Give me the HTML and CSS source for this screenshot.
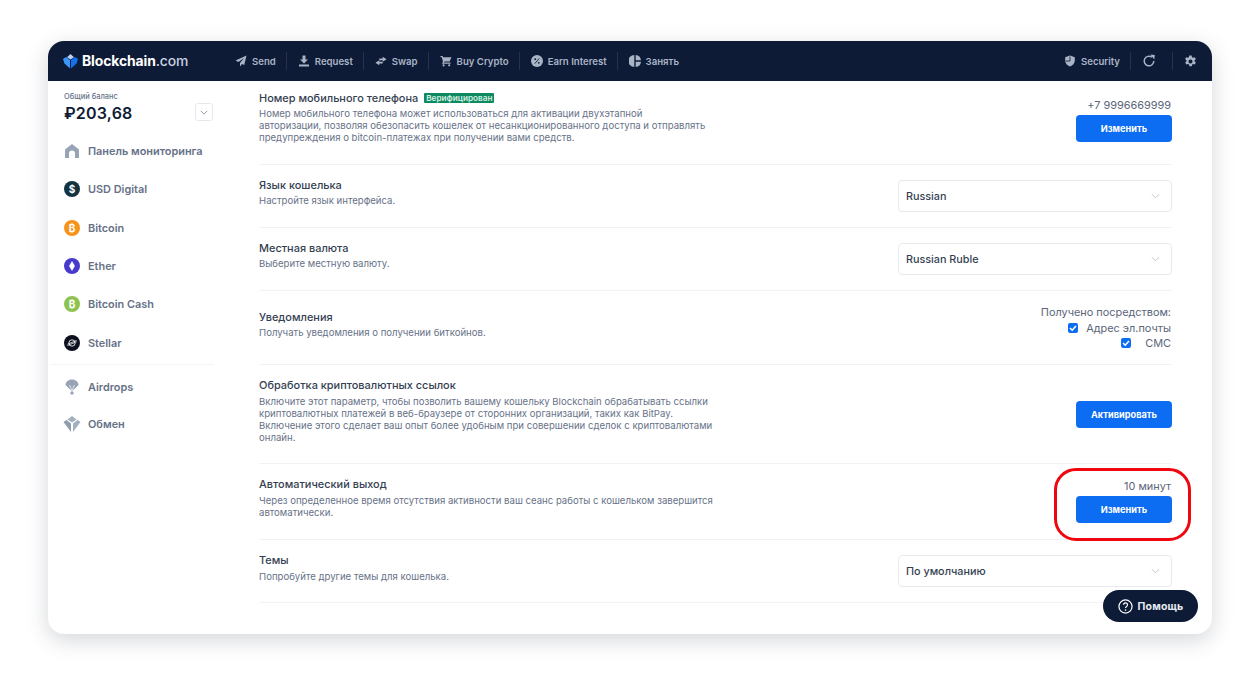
FILE: index.html
```html
<!DOCTYPE html>
<html lang="ru">
<head>
<meta charset="utf-8">
<title>Blockchain.com</title>
<link rel="stylesheet" href="styles.css">
</head>
<body>
<div class="window">
  <header class="topbar">
    <div class="logo">
      <svg class="logo-mark" viewBox="0 0 15 15"><path d="M7.500 0L11 3.200 7.500 5.600 4 3.200z" fill="#bcd3f5"/><path d="M0 5l3-2 4 3v8.500L1.500 9.500z" fill="#3b97f7"/><path d="M15 5l-3-2-4 3v8.500l5.500-5z" fill="#1272ee"/></svg>
      <span class="logo-text"><b>Blockchain</b>.com</span>
    </div>
    <nav class="nav">
      <a class="nav-item"><svg viewBox="0 0 12 12"><path d="M11.500.5L.5 5.500l3 1.600L9 3 5 8v3.500l2-2.600 2.200 1.100z"/></svg>Send</a>
      <a class="nav-item"><svg viewBox="0 0 12 12"><path d="M4.500.5h3v4H10L6 8.500 2 4.500h2.500zM1 9.500h10v2H1z"/></svg>Request</a>
      <a class="nav-item"><svg viewBox="0 0 14 12"><path d="M9 1l4.500 3L9 7V5H5V3h4zM5 5v2h4v2H5v2L.5 8z"/></svg>Swap</a>
      <a class="nav-item"><svg viewBox="0 0 12 12"><path d="M.5 1H2.600l.5 1.200h8.400L9.600 6.500H4.400l-.5 1h6.600v1.200H2l1-2.300L1.800 2.200H.5z"/><circle cx="3.600" cy="10.300" r="1.100"/><circle cx="9.200" cy="10.300" r="1.100"/></svg>Buy Crypto</a>
      <a class="nav-item"><svg viewBox="0 0 12 12"><circle cx="6" cy="6" r="6"/><path d="M3.800 8.600l4.400-5.200" stroke="#0e1b36" stroke-width=".9"/><circle cx="4.200" cy="4.200" r=".9" fill="#0e1b36"/><circle cx="7.800" cy="7.800" r=".9" fill="#0e1b36"/></svg>Earn Interest</a>
      <a class="nav-item"><svg viewBox="0 0 12 12"><path d="M5.300 0v12A6 6 0 0 1 5.300 0zM6.700 0A6 6 0 0 1 12 5.300H6.700zM6.700 6.700H12A6 6 0 0 1 6.700 12z"/></svg>Занять</a>
    </nav>
    <div class="tools">
      <a class="nav-item security"><svg viewBox="0 0 12 12"><path d="M6 .5l4.800 1.700v3.300c0 3-2 5.100-4.800 6-2.800-.9-4.800-3-4.800-6V2.200z"/><path d="M6 1.500v4.500H1.800" stroke="#0e1b36" stroke-width=".8" fill="none"/></svg>Security</a>
      <a class="nav-item tool-refresh"><svg viewBox="0 0 14 14"><path d="M11.800 7A4.800 4.800 0 1 1 9.900 3.200" fill="none" stroke="#a9b4c6" stroke-width="1.500"/><path d="M8.300.5l4.500.5-.5 4.500z" fill="#a9b4c6"/></svg></a>
      <a class="nav-item tool-gear"><svg viewBox="0 0 14 14"><path fill-rule="evenodd" d="M5.800.5h2.400l.4 1.800 1.100.6 1.700-.6L12.800 4.400l-1.400 1.200v1.300l1.400 1.200-1.200 2.100-1.700-.6-1.100.6-.4 1.800H5.800l-.4-1.800-1.100-.6-1.700.6L1.200 8.100l1.400-1.200V5.600L1.200 4.400l1.200-2.100 1.700.6 1.100-.6zM7 4.800a2.200 2.200 0 1 0 0 4.400 2.200 2.200 0 0 0 0-4.400z"/></svg></a>
    </div>
  </header>
  <div class="main">
    <aside class="sidebar">
      <div class="balance">
        <div>
          <div class="balance-label">Общий баланс</div>
          <div class="balance-value">₽203,68</div>
        </div>
        <span class="balance-toggle"><svg viewBox="0 0 10 6"><path d="M1 1l4 4 4-4" fill="none" stroke="#8a96a8" stroke-width="1.200"/></svg></span>
      </div>
      <ul class="menu">
        <li class="menu-item home"><svg class="ico" viewBox="0 0 16 16"><path d="M8 1l7 5.500V15h-4v-4.500a3 3 0 0 0-6 0V15H1V6.500z" fill="#98a4b6"/></svg>Панель мониторинга</li>
        <li class="menu-item"><span class="coin usd">$</span>USD Digital</li>
        <li class="menu-item"><span class="coin btc">₿</span>Bitcoin</li>
        <li class="menu-item"><span class="coin eth"><svg viewBox="0 0 8 12"><path d="M4 0l3.500 6L4 12 .5 6z" fill="#fff"/></svg></span>Ether</li>
        <li class="menu-item"><span class="coin bch">₿</span>Bitcoin Cash</li>
        <li class="menu-item"><span class="coin xlm"><svg viewBox="0 0 12 12"><circle cx="6" cy="6" r="3.800" fill="none" stroke="#fff" stroke-width="1"/><path d="M.5 7.500L11.500 3M.5 9L11.500 4.500" stroke="#fff" stroke-width=".9"/></svg></span>Stellar</li>
      </ul>
      <ul class="menu menu-extra">
        <li class="menu-item"><svg class="ico" viewBox="0 0 16 16"><path d="M8 .5c3.800 0 6.500 2.500 6.500 5.500l-5.700 5.500H7.200L1.500 6C1.500 3 4.200.5 8 .5z" fill="#98a4b6"/><path d="M5.500 6L8 11.500 10.500 6" stroke="#fff" stroke-width=".7" fill="none"/><circle cx="8" cy="14" r="1.700" fill="#98a4b6"/></svg>Airdrops</li>
        <li class="menu-item"><svg class="ico ico-lg" viewBox="0 0 18 18"><path d="M9 1l4.500 3.500L9 7.500 4.500 4.500z" fill="#a3aebe"/><path d="M.5 7l3-2L8 8.500V17z" fill="#8f9bae"/><path d="M17.500 7l-3-2L10 8.500V17z" fill="#a3aebe"/></svg>Обмен</li>
      </ul>
    </aside>
    <section class="settings">
      <div class="row row-phone">
        <div class="info">
          <h3 class="title">Номер мобильного телефона <span class="badge">Верифицирован</span></h3>
          <p class="desc">Номер мобильного телефона может использоваться для активации двухэтапной<br>авторизации, позволяя обезопасить кошелек от несанкционированного доступа и отправлять предупреждения о bitcoin-платежах при получении вами средств.</p>
        </div>
        <div class="control">
          <span class="value">+7 9996669999</span>
          <button class="btn">Изменить</button>
        </div>
      </div>
      <div class="row row-select">
        <div class="info">
          <h3 class="title">Язык кошелька</h3>
          <p class="desc">Настройте язык интерфейса.</p>
        </div>
        <div class="select">Russian<svg viewBox="0 0 10 6"><path d="M1 1l4 4 4-4" fill="none" stroke="#b5bfcc" stroke-width="1"/></svg></div>
      </div>
      <div class="row row-select">
        <div class="info">
          <h3 class="title">Местная валюта</h3>
          <p class="desc">Выберите местную валюту.</p>
        </div>
        <div class="select">Russian Ruble<svg viewBox="0 0 10 6"><path d="M1 1l4 4 4-4" fill="none" stroke="#b5bfcc" stroke-width="1"/></svg></div>
      </div>
      <div class="row row-notify">
        <div class="info">
          <h3 class="title">Уведомления</h3>
          <p class="desc">Получать уведомления о получении биткойнов.</p>
        </div>
        <div class="control control-notify">
          <span class="value">Получено посредством:</span>
          <label class="check"><span class="box"><svg viewBox="0 0 10 10"><path d="M2 5l2.200 2.200L8 3" fill="none" stroke="#fff" stroke-width="1.600"/></svg></span><span class="check-label">Адрес эл.почты</span></label>
          <label class="check"><span class="box"><svg viewBox="0 0 10 10"><path d="M2 5l2.200 2.200L8 3" fill="none" stroke="#fff" stroke-width="1.600"/></svg></span><span class="check-label">СМС</span></label>
        </div>
      </div>
      <div class="row row-links">
        <div class="info">
          <h3 class="title">Обработка криптовалютных ссылок</h3>
          <p class="desc">Включите этот параметр, чтобы позволить вашему кошельку Blockchain обрабатывать ссылки криптовалютных платежей в веб-браузере от сторонних организаций, таких как BitPay. Включение этого сделает ваш опыт более удобным при совершении сделок с криптовалютами онлайн.</p>
        </div>
        <div class="control">
          <button class="btn">Активировать</button>
        </div>
      </div>
      <div class="row row-logout">
        <div class="info">
          <h3 class="title">Автоматический выход</h3>
          <p class="desc">Через определенное время отсутствия активности ваш сеанс работы с кошельком завершится автоматически.</p>
        </div>
        <div class="control">
          <span class="value">10 минут</span>
          <button class="btn">Изменить</button>
        </div>
      </div>
      <div class="row row-select row-theme">
        <div class="info">
          <h3 class="title">Темы</h3>
          <p class="desc">Попробуйте другие темы для кошелька.</p>
        </div>
        <div class="select">По умолчанию<svg viewBox="0 0 10 6"><path d="M1 1l4 4 4-4" fill="none" stroke="#b5bfcc" stroke-width="1"/></svg></div>
      </div>
    </section>
  </div>
  <div class="highlight"></div>
  <button class="help"><svg viewBox="0 0 16 16"><circle cx="8" cy="8" r="7" fill="none" stroke="#fff" stroke-width="1.300"/><path d="M5.900 6.200a2.100 2.100 0 1 1 3.300 1.700c-.8.500-1.200.9-1.200 1.700" fill="none" stroke="#fff" stroke-width="1.300"/><circle cx="8" cy="11.700" r=".9" fill="#fff"/></svg>Помощь</button>
</div>
</body>
</html>
```

FILE: styles.css
```css
* { box-sizing: border-box; }
html, body { margin: 0; padding: 0; background: #fff; }
body { height: 675px; overflow: hidden; font-family: Inter, "Noto Sans", sans-serif; padding: 41px 48px 0; }
.window { position: relative; width: 1164px; height: 593px; background: #fff; border-radius: 16px; box-shadow: 0 6px 22px rgba(40,50,70,.2); display: flex; flex-direction: column; }
.topbar { height: 40px; flex: none; background: #0e1b36; border-radius: 16px 16px 0 0; display: flex; align-items: center; padding: 0 15px; }
.logo { display: flex; align-items: center; gap: 4px; width: 172px; flex: none; }
.logo-mark { width: 15px; height: 15px; flex: none; }
.logo-text { color: #c9d3e2; font-size: 13.900px; font-weight: 500; letter-spacing: -.1px; }
.logo-text b { color: #fff; font-weight: 700; }
.nav { display: flex; align-items: center; }
.nav-item { display: flex; align-items: center; gap: 5px; color: #a9b4c6; font-size: 9.600px; font-weight: 600; height: 18px; padding: 0 10px 0 11px; border-left: 1px solid #26324c; white-space: nowrap; }
.nav-item:first-child { border-left: 0; padding-left: 0; }
.nav-item svg { width: 12px; height: 12px; fill: #a9b4c6; flex: none; }
.tools { margin-left: auto; display: flex; align-items: center; }
.tools .tool-refresh { padding: 0 16px 0 11px; }
.tools .tool-gear { padding: 0 0 0 11px; }
.tool-refresh svg { width: 14px; height: 14px; }
.tool-gear svg { width: 13px; height: 13px; }
.main { flex: 1; display: flex; min-height: 0; }
.sidebar { width: 200px; flex: none; padding: 11px 0 0 16px; }
.balance { display: flex; justify-content: space-between; width: 149px; }
.balance-label { font-size: 7.500px; font-weight: 500; color: #67738a; line-height: 10px; }
.balance-value { font-size: 16px; font-weight: 600; color: #0e1b36; line-height: 21px; margin-top: 1px; letter-spacing: .2px; }
.balance-toggle { width: 18px; height: 18px; margin-top: 11px; border: 1px solid #e4e8ee; border-radius: 3px; display: flex; align-items: center; justify-content: center; }
.balance-toggle svg { width: 8px; height: 5px; }
.menu { list-style: none; margin: 0; padding: 0; }
.menu-item { display: flex; align-items: center; gap: 8px; font-size: 10.900px; font-weight: 600; color: #677288; height: 38.300px; white-space: nowrap; }
.menu-item.home { margin-top: 8px; }
.menu-extra { border-top: 1px solid #f2f4f6; margin: 2px 0 0 -13px; padding: 3px 0 0 13px; width: 163px; }
.menu-item .ico { width: 16px; height: 16px; flex: none; }
.menu-item .ico-lg { width: 18px; height: 18px; margin: 0 -1px; }
.menu-extra .menu-item { height: 37.500px; }
.coin { width: 16px; height: 16px; border-radius: 50%; flex: none; display: flex; align-items: center; justify-content: center; color: #fff; font-size: 10px; font-weight: 700; }
.coin svg { width: 10px; height: 10px; }
.usd { background: #12333f; }
.btc { background: #f7931a; }
.eth { background: #473bcb; }
.bch { background: #8dc351; }
.xlm { background: #0b0f1e; }
.settings { flex: 1; padding: 0 40px 0 11px; min-width: 0; }
.row { display: flex; justify-content: space-between; border-bottom: 1px solid #f1f3f5; }
.row-phone { height: 84px; padding-top: 11px; }
.row-phone .control { margin-top: 6px; gap: 2px; }
.row-select { height: 63px; padding-top: 14px; }
.row-select .select { margin-top: 1px; }
.row-notify { height: 74px; padding-top: 14px; }
.row-links { height: 99px; padding-top: 14px; }
.row-links .control { margin-top: 22px; }
.row-logout { height: 76px; padding-top: 14px; }
.row-logout .control { margin-top: 1px; gap: 2px; }
.row-notify .info { padding-top: 6px; }
.info { width: 455px; flex: none; }
.title { margin: -1px 0 0; font-size: 10.950px; font-weight: 500; color: #353f52; line-height: 14px; }
.badge { display: inline-block; background: #0e8a5f; color: #d5f0e4; font-size: 8.200px; font-weight: 600; line-height: 10px; padding: 0 2px; border-radius: 1px; vertical-align: 1px; margin-left: 3px; }
.desc { margin: 3px 0 0; font-size: 9.600px; line-height: 12px; color: #677288; }
.row-links .desc, .row-logout .desc, .row-theme .desc { margin-top: 4px; }
.control { display: flex; flex-direction: column; align-items: flex-end; gap: 3px; }
.value { font-size: 10.900px; line-height: 15px; color: #5c667a; margin-right: 1px; }
.btn { width: 96px; height: 27px; border: 0; border-radius: 4px; background: #0c6cf2; color: #fff; font-family: inherit; font-size: 9.200px; font-weight: 700; padding: 0; }
.select { width: 274px; height: 32px; border: 1px solid #e6eaef; border-radius: 4px; display: flex; align-items: center; justify-content: space-between; padding: 0 11px 0 7px; font-size: 10.800px; font-weight: 500; color: #353f52; }
.select svg { width: 9px; height: 6px; }
.control-notify { gap: 0; }
.control-notify .check:nth-child(2) { margin-top: 1px; }
.check { display: flex; align-items: center; font-size: 10.900px; line-height: 15px; color: #5c667a; margin-right: 1px; }
.box { width: 10px; height: 10px; background: #0c6cf2; border-radius: 2px; margin-right: 8px; display: flex; margin-top: -2px; }
.check:last-child .box { margin-right: 14px; }
.highlight { position: absolute; left: 1006px; top: 427px; width: 137px; height: 73px; border: 3.500px solid #f0060f; border-radius: 22px; }
.help { position: absolute; left: 1055px; top: 549px; width: 95px; height: 32px; border: 0; border-radius: 16px; background: #0e1b36; color: #e6ebf2; font-family: inherit; font-size: 10.500px; font-weight: 700; letter-spacing: .2px; display: flex; align-items: center; justify-content: center; gap: 5px; padding: 0; }
.help svg { width: 15px; height: 15px; }
```
